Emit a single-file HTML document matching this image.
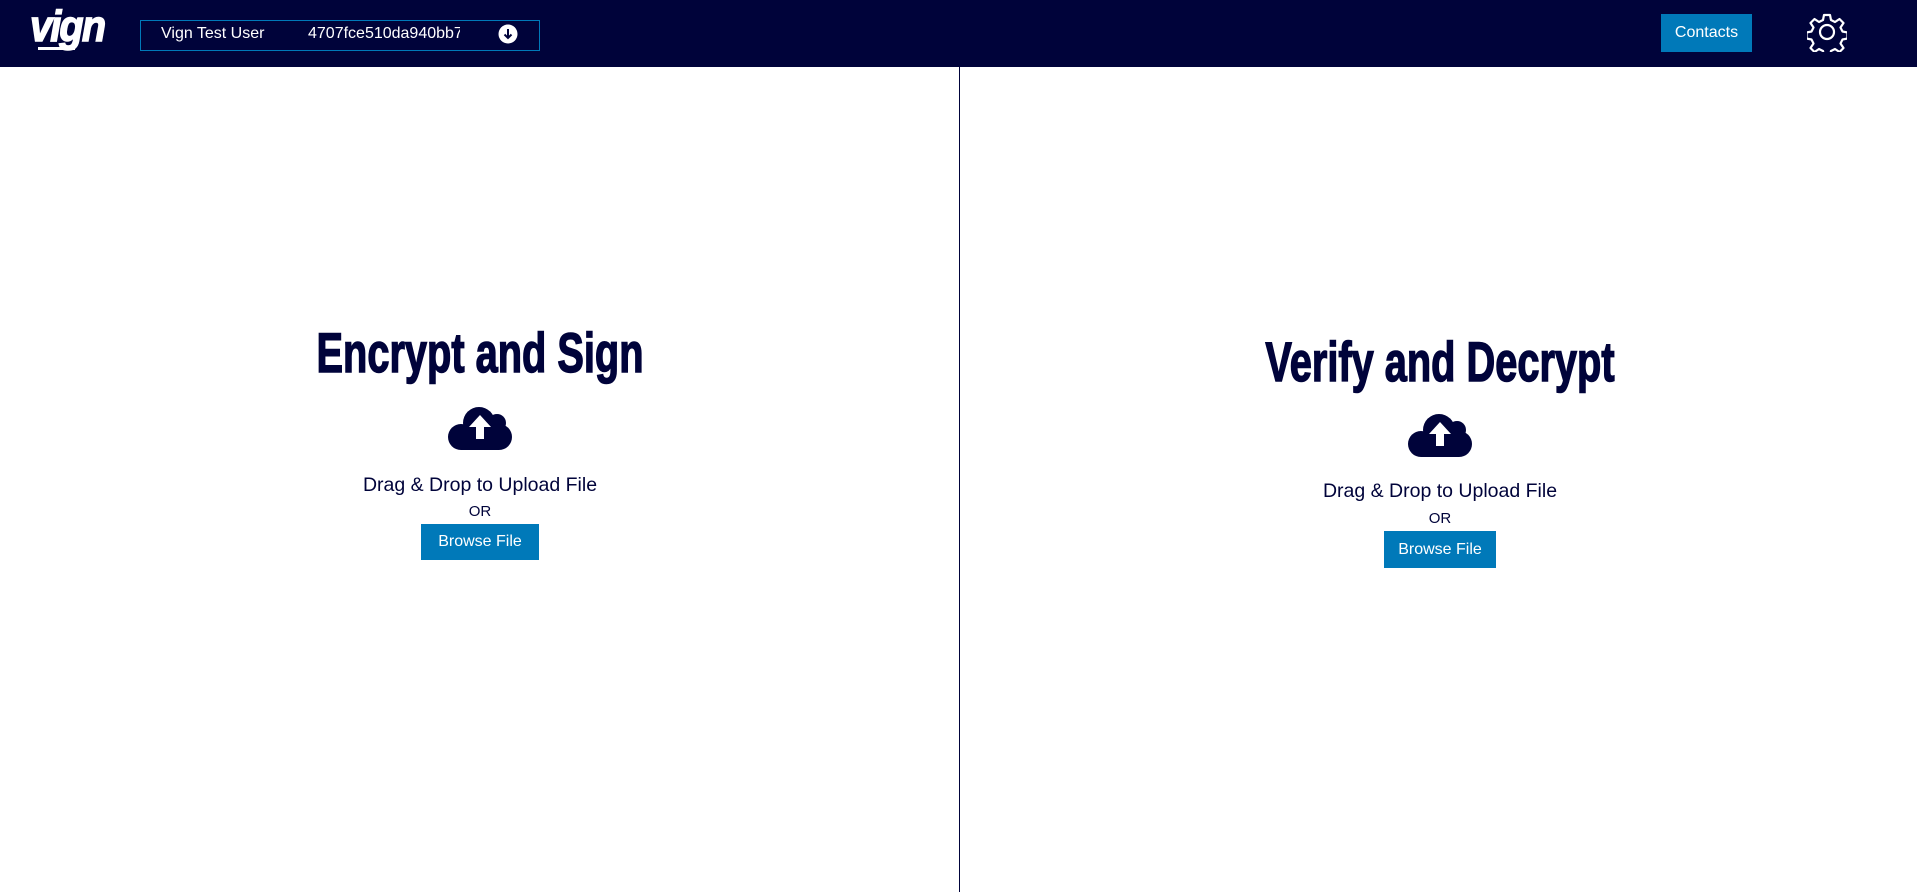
<!DOCTYPE html>
<html><head><meta charset="utf-8"><style>
*{margin:0;padding:0;box-sizing:border-box}
body{width:1917px;height:892px;background:#fff;position:relative;overflow:hidden;font-family:"Liberation Sans",sans-serif;color:#00033a}
.hdr{position:absolute;left:0;top:0;width:1917px;height:67px;background:#00033a}
.abs{position:absolute}
.title{position:absolute;font-weight:bold;font-size:56px;line-height:56px;white-space:nowrap;transform:scaleX(0.71);transform-origin:center top;text-align:center;width:800px;color:#00033a;-webkit-text-stroke:1.5px #00033a}
.drag{position:absolute;font-size:19.5px;text-align:center;width:400px}
.or{position:absolute;font-size:15px;text-align:center;width:200px}
.btn{position:absolute;background:#0079b9;color:#fff;font-size:16px;display:flex;align-items:center;justify-content:center}
</style></head><body>
<div class="hdr"></div>
<div class="abs" style="left:30px;top:2px;color:#fff;font-weight:bold;font-style:italic;font-size:44px;letter-spacing:-2px;transform:scaleX(0.9);transform-origin:left;-webkit-text-stroke:1.5px #fff">vign</div>
<div class="abs" style="left:38px;top:47px;width:37px;height:3px;background:#fff"></div>
<div class="abs" style="left:140px;top:20px;width:400px;height:31px;border:1px solid #0079b9"></div>
<div class="abs" style="left:161px;top:25px;color:#fff;font-size:16px">Vign Test User</div>
<div class="abs" style="left:308px;top:25px;color:#fff;font-size:16px;width:152px;overflow:hidden;white-space:nowrap">4707fce510da940bb7</div>
<svg class="abs" style="left:498px;top:24px" width="20" height="20" viewBox="0 0 20 20"><circle cx="10" cy="10" r="9.5" fill="#fff"/><path d="M10 5v9M6.5 10.5L10 14l3.5-3.5" stroke="#00033a" stroke-width="2" fill="none"/></svg>
<div class="btn" style="left:1661px;top:14px;width:91px;height:38px;font-size:16px">Contacts</div>
<svg class="abs" style="left:1807px;top:12px" width="40" height="40" viewBox="0 0 40 40"><g fill="none" stroke="#fff" stroke-width="2.2"><path d="M17 3h6l1 5 4 2 4.5-3 4 4-3 4.5 2 4 5 1v6l-5 1-2 4 3 4.5-4 4-4.5-3-4 2-1 5h-6l-1-5-4-2-4.5 3-4-4 3-4.5-2-4-5-1v-6l5-1 2-4-3-4.5 4-4 4.5 3 4-2z" stroke-linejoin="round"/><circle cx="20" cy="20" r="7"/></g></svg>
<div class="abs" style="left:959px;top:67px;width:1px;height:825px;background:#00033a"></div>

<div class="title" style="left:80px;top:325px">Encrypt and Sign</div>
<svg class="abs" style="left:448px;top:406px" width="64" height="45" viewBox="0 0 64 45"><g fill="#00033a"><circle cx="31" cy="17" r="16"/><circle cx="49" cy="17" r="9"/><circle cx="13" cy="31" r="13"/><circle cx="51" cy="31" r="13"/><rect x="13" y="20" width="38" height="24"/></g><path d="M32 9L21 21h7v12h8V21h7z" fill="#fff"/></svg>
<div class="drag" style="left:280px;top:474px">Drag &amp; Drop to Upload File</div>
<div class="or" style="left:380px;top:503px">OR</div>
<div class="btn" style="left:421px;top:524px;width:118px;height:36px">Browse File</div>

<div class="title" style="left:1040px;top:334px">Verify and Decrypt</div>
<svg class="abs" style="left:1408px;top:413px" width="64" height="45" viewBox="0 0 64 45"><g fill="#00033a"><circle cx="31" cy="17" r="16"/><circle cx="49" cy="17" r="9"/><circle cx="13" cy="31" r="13"/><circle cx="51" cy="31" r="13"/><rect x="13" y="20" width="38" height="24"/></g><path d="M32 9L21 21h7v12h8V21h7z" fill="#fff"/></svg>
<div class="drag" style="left:1240px;top:480px">Drag &amp; Drop to Upload File</div>
<div class="or" style="left:1340px;top:510px">OR</div>
<div class="btn" style="left:1384px;top:531px;width:112px;height:37px">Browse File</div>
</body></html>
